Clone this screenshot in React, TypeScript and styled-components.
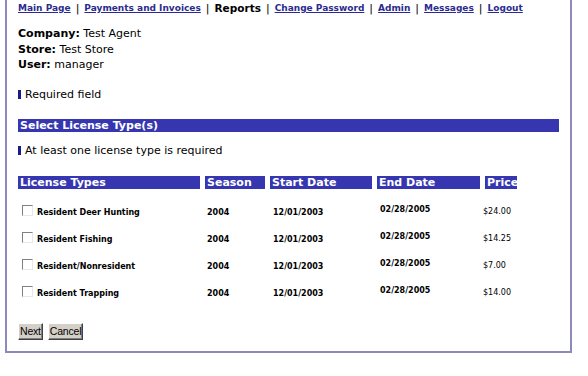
import React from 'react';
import styled, { createGlobalStyle } from 'styled-components';

const GlobalStyle = createGlobalStyle`
  html, body {
    margin: 0;
    padding: 0;
    background: #ffffff;
  }
  body {
    font-family: "DejaVu Sans", Verdana, sans-serif;
    color: #000;
  }
`;

const licenses = [
  { name: 'Resident Deer Hunting', season: '2004', start: '12/01/2003', end: '02/28/2005', price: '$24.00' },
  { name: 'Resident Fishing', season: '2004', start: '12/01/2003', end: '02/28/2005', price: '$14.25' },
  { name: 'Resident/Nonresident', season: '2004', start: '12/01/2003', end: '02/28/2005', price: '$7.00' },
  { name: 'Resident Trapping', season: '2004', start: '12/01/2003', end: '02/28/2005', price: '$14.00' },
];

const navItems = [
  { label: 'Main Page', link: true },
  { label: 'Payments and Invoices', link: true },
  { label: 'Reports', link: false },
  { label: 'Change Password', link: true },
  { label: 'Admin', link: true },
  { label: 'Messages', link: true },
  { label: 'Logout', link: true },
];

const App = () => {
  return (
    <>
      <GlobalStyle />
      <Frame>
        <Nav>
          {navItems.map((item, i) => (
            <React.Fragment key={item.label}>
              {i > 0 && <Sep>|</Sep>}
              {item.link ? <NavLink href="#">{item.label}</NavLink> : <Current>{item.label}</Current>}
            </React.Fragment>
          ))}
        </Nav>

        <Info>
          <InfoLine><b>Company:</b> Test Agent</InfoLine>
          <InfoLine><b>Store:</b> Test Store</InfoLine>
          <InfoLine><b>User:</b> manager</InfoLine>
        </Info>

        <Note>
          <Marker />
          Required field
        </Note>

        <SectionBar>Select License Type(s)</SectionBar>

        <Note $top={11}>
          <Marker />
          At least one license type is required
        </Note>

        <Grid>
          <HeadCell>License Types</HeadCell>
          <HeadCell>Season</HeadCell>
          <HeadCell>Start Date</HeadCell>
          <HeadCell>End Date</HeadCell>
          <HeadCell>Price</HeadCell>
          {licenses.map((l) => (
            <React.Fragment key={l.name}>
              <NameCell>
                <Check />
                {l.name}
              </NameCell>
              <DataCell $left={2}>{l.season}</DataCell>
              <DataCell $left={3}>{l.start}</DataCell>
              <DataCell $left={3} $raise={5}>{l.end}</DataCell>
              <PriceCell>{l.price}</PriceCell>
            </React.Fragment>
          ))}
        </Grid>

        <Buttons>
          <Button>Next</Button>
          <Button>Cancel</Button>
        </Buttons>
      </Frame>
    </>
  );
};

export default App;

const Frame = styled.div`
  margin-left: 5px;
  width: 552px;
  height: 351px;
  padding: 0 0 0 11px;
  border: 2px solid #8e89bb;
  border-top: none;
`;

const Nav = styled.div`
  display: flex;
  align-items: center;
  padding-top: 1px;
  height: 14px;
  font-size: 9px;
  font-weight: bold;
  white-space: nowrap;
`;

const NavLink = styled.a`
  color: #2b2b8f;
  text-decoration: underline;
`;

const Current = styled.span`
  color: #000;
  font-size: 10.5px;
`;

const Sep = styled.span`
  font-weight: normal;
  font-size: 11px;
  margin: 0 5px;
  color: #000;
`;

const Info = styled.div`
  margin-top: 11px;
  font-size: 11px;
  line-height: 15.5px;
`;

const InfoLine = styled.div``;

const Note = styled.div<{ $top?: number }>`
  display: flex;
  align-items: center;
  margin-top: ${(p) => p.$top ?? 14}px;
  font-size: 11px;
  height: 15px;
`;

const Marker = styled.span`
  display: inline-block;
  width: 3px;
  height: 9px;
  background: #1a1a8a;
  margin-right: 4px;
`;

const SectionBar = styled.div`
  margin-top: 17px;
  width: 541px;
  height: 13px;
  line-height: 13px;
  background: #3636b0;
  color: #fff;
  font-size: 11px;
  font-weight: bold;
  padding-left: 2px;
  box-sizing: border-box;
`;

const Grid = styled.div`
  margin-top: 18px;
  display: grid;
  grid-template-columns: 182px 60px 102px 103px 32px;
  column-gap: 5px;
  grid-auto-rows: 27px;
  grid-template-rows: 13px;
  row-gap: 0;
  align-items: center;
`;

const HeadCell = styled.div`
  align-self: start;
  height: 13px;
  line-height: 13px;
  background: #3636b0;
  color: #fff;
  font-size: 11px;
  font-weight: bold;
  padding-left: 2px;
  white-space: nowrap;
  overflow: hidden;
`;

const NameCell = styled.div`
  display: flex;
  align-items: center;
  font-size: 8px;
  font-weight: bold;
  white-space: nowrap;
  padding-top: 20px;
  padding-left: 4px;
`;

const Check = styled.span`
  display: inline-block;
  width: 9px;
  height: 9px;
  margin-right: 4px;
  margin-top: -3px;
  border-top: 1px solid #808080;
  border-left: 1px solid #808080;
  border-bottom: 1px solid #e8e8e8;
  border-right: 1px solid #e8e8e8;
  background: #fff;
`;

const DataCell = styled.div<{ $left?: number; $raise?: number }>`
  font-size: 8px;
  font-weight: bold;
  white-space: nowrap;
  padding-left: ${(p) => p.$left ?? 0}px;
  padding-top: ${(p) => 20 - (p.$raise ?? 0)}px;
`;

const PriceCell = styled.div`
  font-size: 8px;
  white-space: nowrap;
  margin-left: -2px;
  padding-top: 18px;
`;

const Buttons = styled.div`
  display: flex;
  gap: 5px;
  margin-top: 26px;
`;

const Button = styled.button`
  font-family: "Liberation Sans", Arial, sans-serif;
  font-size: 10.5px;
  letter-spacing: -0.2px;
  height: 17px;
  padding: 0 1px;
  background: #d4d0c8;
  color: #000;
  border: 1px solid;
  border-color: #fff #404040 #404040 #fff;
  box-shadow: inset -1px -1px 0 #808080;
  line-height: 13px;
`;
